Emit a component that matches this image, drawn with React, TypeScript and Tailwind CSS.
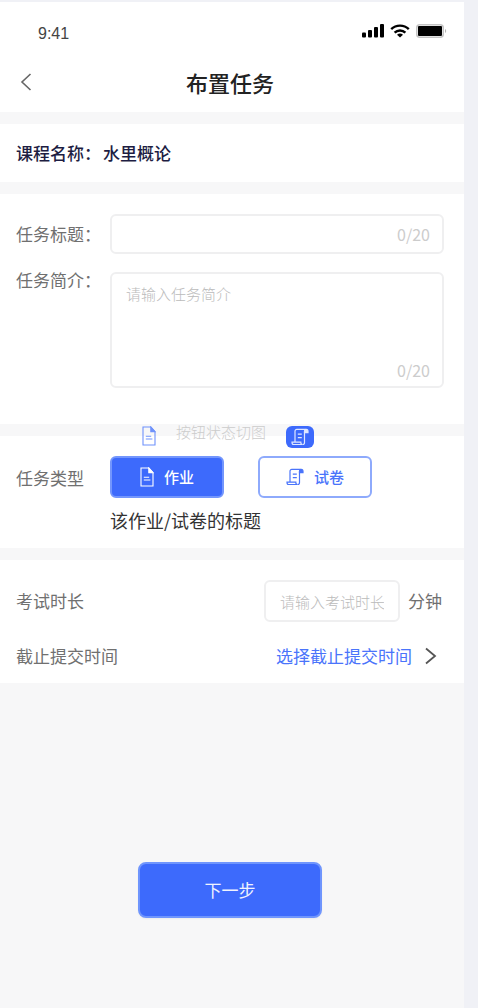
import React, { useState } from 'react';

type TaskType = 'homework' | 'exam';

interface IconProps {
  className?: string;
}

const FIELD_BOX = 'rounded-md border-2 border-[#efeff0] bg-white';

const StatusIcons = () => (
  <div className="flex items-center gap-1.5 pt-0.5 text-black">
    <svg className="h-3.5 w-5.5" viewBox="0 0 22 14" fill="currentColor">
      <rect x="0" y="8.5" width="4" height="5" rx="1" />
      <rect x="6" y="6" width="4" height="7.5" rx="1" />
      <rect x="12" y="3" width="4" height="10.5" rx="1" />
      <rect x="18" y="0" width="4" height="13.5" rx="1" />
    </svg>
    <svg className="h-3.5 w-5" viewBox="0 0 20 14" fill="none" stroke="currentColor" strokeWidth="2.4">
      <path d="M1.2 5.2a12.6 12.6 0 0 1 17.6 0" />
      <path d="M4.6 8.6a7.8 7.8 0 0 1 10.8 0" />
      <path d="M10 13.6 7 10.8a4.4 4.4 0 0 1 6 0Z" fill="currentColor" stroke="none" />
    </svg>
    <svg className="h-3.5 w-8" viewBox="0 0 32 14">
      <rect x="0.75" y="0.75" width="26.5" height="12.5" rx="3" fill="none" stroke="#c4c4c4" strokeWidth="1.5" />
      <rect x="2" y="2" width="24" height="10" rx="1" fill="currentColor" />
      <path d="M29 5v4c1.6-.6 1.6-3.4 0-4Z" fill="#b5b5b5" />
    </svg>
  </div>
);

const DocIcon: React.FC<IconProps> = ({ className }) => (
  <svg className={className} viewBox="0 0 14 20" fill="none" stroke="currentColor" strokeWidth="1.1">
    <path d="M8.8 1H1v18h12V5.6Z" />
    <path d="M8.8 1v4.6H13Z" fill="currentColor" />
    <path d="M3.8 10.2h5.4M3.8 13h6.6" />
  </svg>
);

const PaperIcon: React.FC<IconProps> = ({ className }) => (
  <svg className={className} viewBox="0 0 18 18" fill="none" stroke="currentColor" strokeWidth="1.2">
    <path d="M4 14V3.2C4 2 4.8 1.4 5.8 1.4H15c-1 0-1.5.8-1.5 2v11c0 1.3-.8 2.1-2 2.1" />
    <path d="M13.5 4.6H17V3.2c0-1.1-.6-1.8-1.6-1.8s-1.9.7-1.9 1.8Z" fill="currentColor" />
    <path d="M11.5 16.5H2.6C1.5 16.5 1 15.6 1 14.2h8.8c0 1.4.5 2.3 1.7 2.3Z" />
    <path d="M6.8 6.2h4M6.8 9.6h4" />
  </svg>
);

const typeOptions: { key: TaskType; label: string }[] = [
  { key: 'homework', label: '作业' },
  { key: 'exam', label: '试卷' },
];

export default function App() {
  const [title, setTitle] = useState('');
  const [intro, setIntro] = useState('');
  const [duration, setDuration] = useState('');
  const [taskType, setTaskType] = useState<TaskType>('homework');

  return (
    <div className="flex min-h-screen flex-col bg-[#f0f1f6] pt-0.5 pr-3.5 font-['Noto_Sans_CJK_SC','Liberation_Sans',sans-serif]">
      <main className="flex flex-1 flex-col gap-3 bg-[#f7f7f8] text-[17px] leading-6 text-[#707070]">
        <header className="bg-white pb-3.5">
          <div className="flex items-start justify-between pt-5 pr-4 pl-9.5 text-base leading-6 text-[#444]">
            <span className="font-['Liberation_Sans',sans-serif]">9:41</span>
            <StatusIcons />
          </div>
          <div className="grid grid-cols-[1fr_auto_1fr] items-center pt-5 pr-6 pl-5">
            <button type="button" aria-label="返回" className="justify-self-start text-[#666]">
              <svg className="h-5 w-3" viewBox="0 0 12 20" fill="none" stroke="currentColor" strokeWidth="1.6">
                <path d="M10.5 2 2 10l8.5 8" />
              </svg>
            </button>
            <h1 className="text-[22px] leading-8 font-medium text-[#222]">布置任务</h1>
          </div>
        </header>

        <section className="flex gap-0.5 bg-white px-4 py-4.25 font-medium text-[#1d1d42]">
          <span>课程名称：</span>
          <span>水里概论</span>
        </section>

        <section className="flex flex-col gap-4.5 bg-white pt-5 pr-5 pb-9 pl-4">
          <div className="flex items-center">
            <label htmlFor="title" className="w-23.5 shrink-0">任务标题：</label>
            <div className={`flex h-10 flex-1 items-center pr-3 pl-3.5 ${FIELD_BOX}`}>
              <input
                id="title"
                maxLength={20}
                value={title}
                onChange={e => setTitle(e.target.value)}
                className="min-w-0 flex-1 text-[15px] outline-none"
              />
              <span className="text-base text-[#ccc]">{title.length}/20</span>
            </div>
          </div>
          <div className="flex items-start">
            <label htmlFor="intro" className="-mt-1 w-23.5 shrink-0">任务简介：</label>
            <div className={`flex h-29 flex-1 flex-col pt-2 pr-3 pb-1 pl-3.5 ${FIELD_BOX}`}>
              <textarea
                id="intro"
                maxLength={20}
                placeholder="请输入任务简介"
                value={intro}
                onChange={e => setIntro(e.target.value)}
                className="flex-1 resize-none text-[15px] leading-6 outline-none placeholder:font-light placeholder:text-[#bbb]"
              />
              <span className="self-end text-base text-[#ccc]">{intro.length}/20</span>
            </div>
          </div>
        </section>

        <section className="relative flex items-start bg-white pt-5 pr-5 pb-4 pl-4">
          {/* button state samples, overlapping the divider above */}
          <div className="absolute -top-3.5 left-35.5 flex items-start text-[15px] leading-6 font-light text-[#ccc]">
            <DocIcon className="mt-1 h-5 w-3.5 text-[#6f92fb]" />
            <span className="ml-5 leading-5">按钮状态切图</span>
            <span className="mt-1 ml-5 flex h-5.5 w-7 items-center justify-center rounded-md bg-[#3d6afc] text-[#dfe7ff]">
              <PaperIcon className="size-4.5" />
            </span>
          </div>
          <span className="w-23.5 shrink-0 pt-2.5">任务类型</span>
          <div className="flex-1">
            <div className="flex gap-8.5">
              {typeOptions.map(({ key, label }) => (
                <button
                  key={key}
                  type="button"
                  aria-pressed={taskType === key}
                  onClick={() => setTaskType(key)}
                  className={`flex h-10.5 w-28.5 items-center justify-center gap-2.5 rounded-md border-2 text-[15px] font-medium ${
                    taskType === key
                      ? 'border-[#7396fd] bg-[#3d6afc] text-white'
                      : 'border-[#8eaafc] bg-white text-[#4a74fb]'
                  }`}
                >
                  {key === 'homework' ? <DocIcon className="h-5 w-3.5" /> : <PaperIcon className="size-4.5" />}
                  {label}
                </button>
              ))}
            </div>
            <p className="pt-2.5 text-lg leading-6 text-[#333]">该作业/试卷的标题</p>
          </div>
        </section>

        <section className="bg-white pt-5 pr-5.5 pb-3.75 pl-4">
          <div className="flex items-center">
            <label htmlFor="duration" className="flex-1">考试时长</label>
            <input
              id="duration"
              inputMode="numeric"
              placeholder="请输入考试时长"
              value={duration}
              onChange={e => setDuration(e.target.value)}
              className="h-10.5 w-34 rounded-md border-2 border-[#efeff0] px-3.5 text-[15px] outline-none placeholder:font-light placeholder:text-[#bbb]"
            />
            <span className="ml-2">分钟</span>
          </div>
          <div className="flex items-center justify-between pt-5.5">
            <span>截止提交时间</span>
            <button type="button" className="flex items-center gap-2.5 text-[#4a74fb]">
              选择截止提交时间
              <svg className="h-5 w-5 text-[#555]" viewBox="0 0 20 20" fill="none" stroke="currentColor" strokeWidth="1.8">
                <path d="m4 2.5 9 7.5-9 7.5" />
              </svg>
            </button>
          </div>
        </section>

        <div className="mt-auto flex justify-center pr-1 pb-22.5">
          <button
            type="button"
            className="h-14 w-46 rounded-lg border-2 border-[#6f95fd] bg-[#3d6afc] text-[#f0f3ff] shadow-xs"
          >
            下一步
          </button>
        </div>
      </main>
    </div>
  );
}
